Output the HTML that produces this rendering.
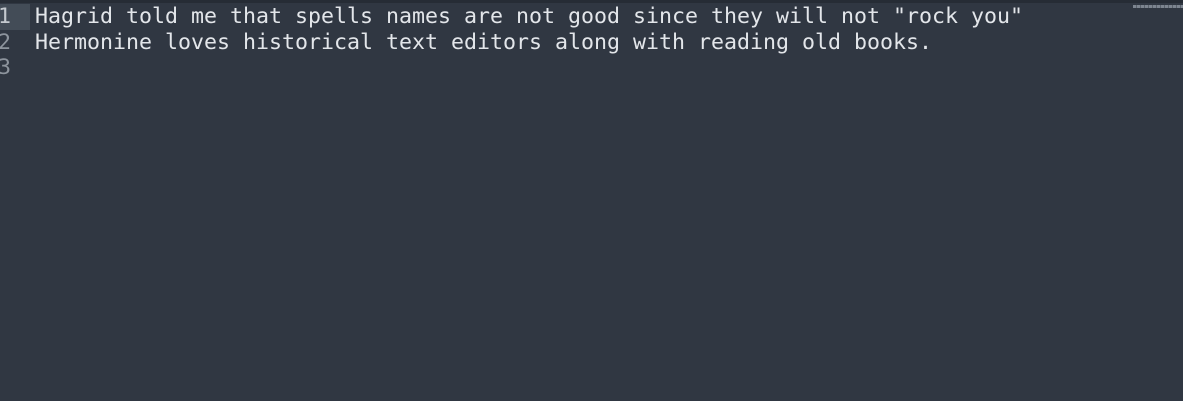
<!DOCTYPE html>
<html><head><style>
html,body{margin:0;padding:0;width:1183px;height:401px;background:#303742;overflow:hidden}
.top{position:absolute;left:0;top:0;width:1183px;height:3px;background:#262c35}
.hl{position:absolute;left:0;top:4px;width:30px;height:26px;background:#434c57}
.g,.t{position:absolute;top:4px;font-family:"DejaVu Sans Mono","Liberation Mono",monospace;font-size:21.6px;line-height:25.5px;white-space:pre}
.g{left:-2px;color:#8d949d}
.t{left:35px;color:#e3e6ea}
.mm{position:absolute;left:1133px;top:5px;width:50px;height:3px;background:repeating-linear-gradient(90deg,#7d8590 0 3px,#5a626c 3px 4px)}
</style></head><body>
<div class="top"></div><div class="hl"></div>
<div class="g"><span style="color:#c4c9cf">1</span>
2
3</div>
<div class="t">Hagrid told me that spells names are not good since they will not "rock you"
Hermonine loves historical text editors along with reading old books.
</div>
<div class="mm"></div>
</body></html>
